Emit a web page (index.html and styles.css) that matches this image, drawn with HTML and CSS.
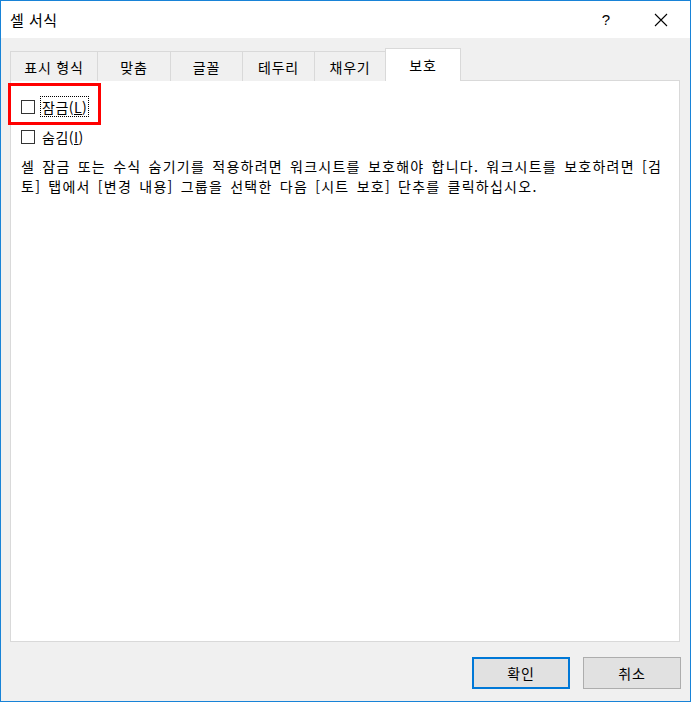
FILE: index.html
```html
<!DOCTYPE html>
<html lang="ko">
<head>
<meta charset="utf-8">
<title>셀 서식</title>
<link rel="stylesheet" href="styles.css">
</head>
<body>
<div class="window">
  <div class="titlebar">
    <span class="title">셀 서식</span>
    <span class="help">?</span>
    <span class="close">
      <svg width="14" height="14" viewBox="0 0 14 14"><path d="M1 1 L13 13 M13 1 L1 13" stroke="#000" stroke-width="1.1" fill="none"/></svg>
    </span>
  </div>
  <div class="body">
    <div class="tabs">
      <div class="tab t1">표시 형식</div>
      <div class="tab t2">맞춤</div>
      <div class="tab t3">글꼴</div>
      <div class="tab t4">테두리</div>
      <div class="tab t5">채우기</div>
      <div class="tab active">보호</div>
    </div>
    <div class="panel">
      <div class="highlight"></div>
      <div class="row first">
        <span class="check"></span>
        <span class="label focus">잠금(<u>L</u>)</span>
      </div>
      <div class="row">
        <span class="check"></span>
        <span class="label">숨김(<u>I</u>)</span>
      </div>
      <p class="note">셀 잠금 또는 수식 숨기기를 적용하려면 워크시트를 보호해야 합니다. 워크시트를 보호하려면 [검토] 탭에서 [변경 내용] 그룹을 선택한 다음 [시트 보호] 단추를 클릭하십시오.</p>
    </div>
    <div class="buttons">
      <button class="btn primary">확인</button>
      <button class="btn">취소</button>
    </div>
  </div>
</div>
</body>
</html>
```
FILE: styles.css
```css
* { box-sizing: border-box; }
html, body { margin: 0; padding: 0; }
body {
  font-family: "Noto Sans CJK KR", "Noto Sans", sans-serif;
  color: #000;
  background: #fff;
}
.window {
  width: 691px;
  height: 702px;
  border: 1px solid #1883d7;
  display: flex;
  flex-direction: column;
  background: #f0f0f0;
}
.titlebar {
  height: 37px;
  background: #fff;
  display: flex;
  align-items: center;
  padding-left: 9px;
  flex: none;
}
.title {
  font-size: 15px;
  letter-spacing: 0.5px;
  flex: 1;
}
.help {
  font-family: "Liberation Sans", sans-serif;
  font-size: 15px;
  width: 20px;
  text-align: center;
  margin-right: 38px;
}
.close {
  width: 14px;
  height: 14px;
  margin-right: 22px;
  display: flex;
}
.body {
  flex: 1;
  display: flex;
  flex-direction: column;
  padding: 10px 9px 12px 9px;
}
.tabs {
  display: flex;
  align-items: flex-end;
  height: 33px;
  position: relative;
  z-index: 1;
  margin-bottom: -1px;
}
.tab {
  height: 30px;
  border: 1px solid #d9d9d9;
  border-bottom: none;
  border-left: none;
  background: #f0f0f0;
  font-size: 14px;
  letter-spacing: 0.8px;
  display: flex;
  align-items: center;
  justify-content: center;
  padding-top: 1px;
}
.tab.t1 { width: 88px; border-left: 1px solid #d9d9d9; }
.tab.t2 { width: 73px; }
.tab.t3 { width: 72px; }
.tab.t4 { width: 72px; }
.tab.t5 { width: 71px; }
.tab.active {
  width: 76px;
  height: 33px;
  background: #fff;
  border-left: 1px solid #d9d9d9;
  margin-left: -1px;
  padding-top: 0;
  padding-bottom: 1px;
}
.panel {
  position: relative;
  flex: none;
  height: 562px;
  width: 670px;
  background: #fff;
  border: 1px solid #d9d9d9;
  padding: 15px 6px 0 10px;
}
.highlight {
  position: absolute;
  left: -3px;
  top: 2px;
  width: 93px;
  height: 42px;
  border: 3px solid #ff0000;
  pointer-events: none;
}
.row {
  display: flex;
  align-items: center;
  height: 21px;
  font-size: 14px;
  letter-spacing: 0.5px;
}
.row + .row { margin-top: 9px; }
.check {
  width: 14px;
  height: 14px;
  border: 1px solid #333;
  background: #fff;
  flex: none;
}
.label {
  margin-left: 5px;
  padding: 0 1px;
  height: 21px;
  display: flex;
  align-items: center;
  border: 1px dotted transparent;
}
.label.focus { border-color: #000; }
.label u { text-underline-offset: 1px; }
.note {
  margin: 9px 0 0 0;
  font-size: 14px;
  line-height: 20px;
  letter-spacing: 1.25px;
  word-spacing: 2px;
}
.buttons {
  display: flex;
  justify-content: flex-end;
  gap: 13px;
  margin-top: auto;
}
.btn {
  width: 98px;
  height: 32px;
  background: #e1e1e1;
  border: 1px solid #adadad;
  font-family: "Noto Sans CJK KR", "Noto Sans", sans-serif;
  font-size: 14px;
  letter-spacing: 0.8px;
  color: #000;
  padding: 0;
}
.btn.primary { border: 2px solid #0078d7; }
```
